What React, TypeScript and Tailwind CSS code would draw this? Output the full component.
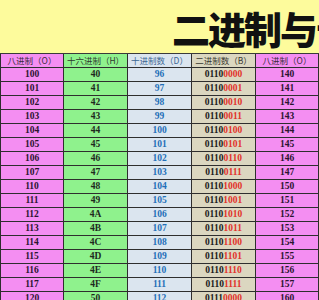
const rows = Array.from({ length: 17 }, (_, i) => {
  const left = 64 + i
  const right = 96 + i
  const bin = right.toString(2).padStart(8, "0")
  return {
    oct: left.toString(8),
    hex: left.toString(16).toUpperCase(),
    dec: String(right),
    binHigh: bin.slice(0, 4),
    binLow: bin.slice(4),
    oct2: right.toString(8),
  }
})

const cjk = { fontFamily: '"Noto Sans CJK SC", "Noto Sans", sans-serif' }
const serif = { fontFamily: '"Liberation Serif", "Times New Roman", serif' }

export default function App() {
  return (
    <div className="w-[319px] h-[300px] overflow-hidden bg-white">
      {/* Title band */}
      <div className="h-[54px] bg-[#fdfb9c] border-b border-[#3a3a3a] overflow-hidden flex items-center pl-[172px]">
        <span
          className="whitespace-nowrap text-[38px] leading-none font-black text-[#111] tracking-[-2px] mt-[3px]"
          style={cjk}
        >
          二进制与十六进制
        </span>
      </div>

      {/* Header */}
      <div className="grid grid-cols-[64px_64px_64px_64px_63px] h-[14px] border-b border-[#2e2e2e] text-[8.5px] leading-[13px]" style={cjk}>
        <div className="bg-[#f48ef2] border-l border-r border-[#2e2e2e] text-center text-[#3a2a3a]">八进制（O）</div>
        <div className="bg-[#8ff28d] border-r border-[#2e2e2e] text-center text-[#2f3a2f]">十六进制（H）</div>
        <div className="bg-[#dbe5ef] border-r border-[#2e2e2e] text-center text-[#3d6794]">十进制数（D）</div>
        <div className="bg-[#dbd7c0] border-r border-[#2e2e2e] text-center text-[#3a3a32]">二进制数（B）</div>
        <div className="bg-[#f48ef2] border-r border-[#2e2e2e] text-center text-[#3a2a3a]">八进制（O）</div>
      </div>

      {/* Rows */}
      {rows.map((r) => (
        <div
          key={r.oct}
          className="grid grid-cols-[64px_64px_64px_64px_63px] h-[14px] border-b border-[#2e2e2e] text-[9.5px] leading-[13px] font-bold"
          style={serif}
        >
          <div className="bg-[#f48ef2] border-l border-r border-[#2e2e2e] text-center text-[#2b1430]">{r.oct}</div>
          <div className="bg-[#8ff28d] border-r border-[#2e2e2e] text-center text-[#1e2a1e]">{r.hex}</div>
          <div className="bg-[#dbe5ef] border-r border-[#2e2e2e] text-center text-[#1f6fb8]">{r.dec}</div>
          <div className="bg-[#dbd7c0] border-r border-[#2e2e2e] text-center">
            <span className="text-[#1a1a1a]">{r.binHigh}</span>
            <span className="text-[#e2322a]">{r.binLow}</span>
          </div>
          <div className="bg-[#f48ef2] border-r border-[#2e2e2e] text-center text-[#2b1430]">{r.oct2}</div>
        </div>
      ))}
    </div>
  )
}
